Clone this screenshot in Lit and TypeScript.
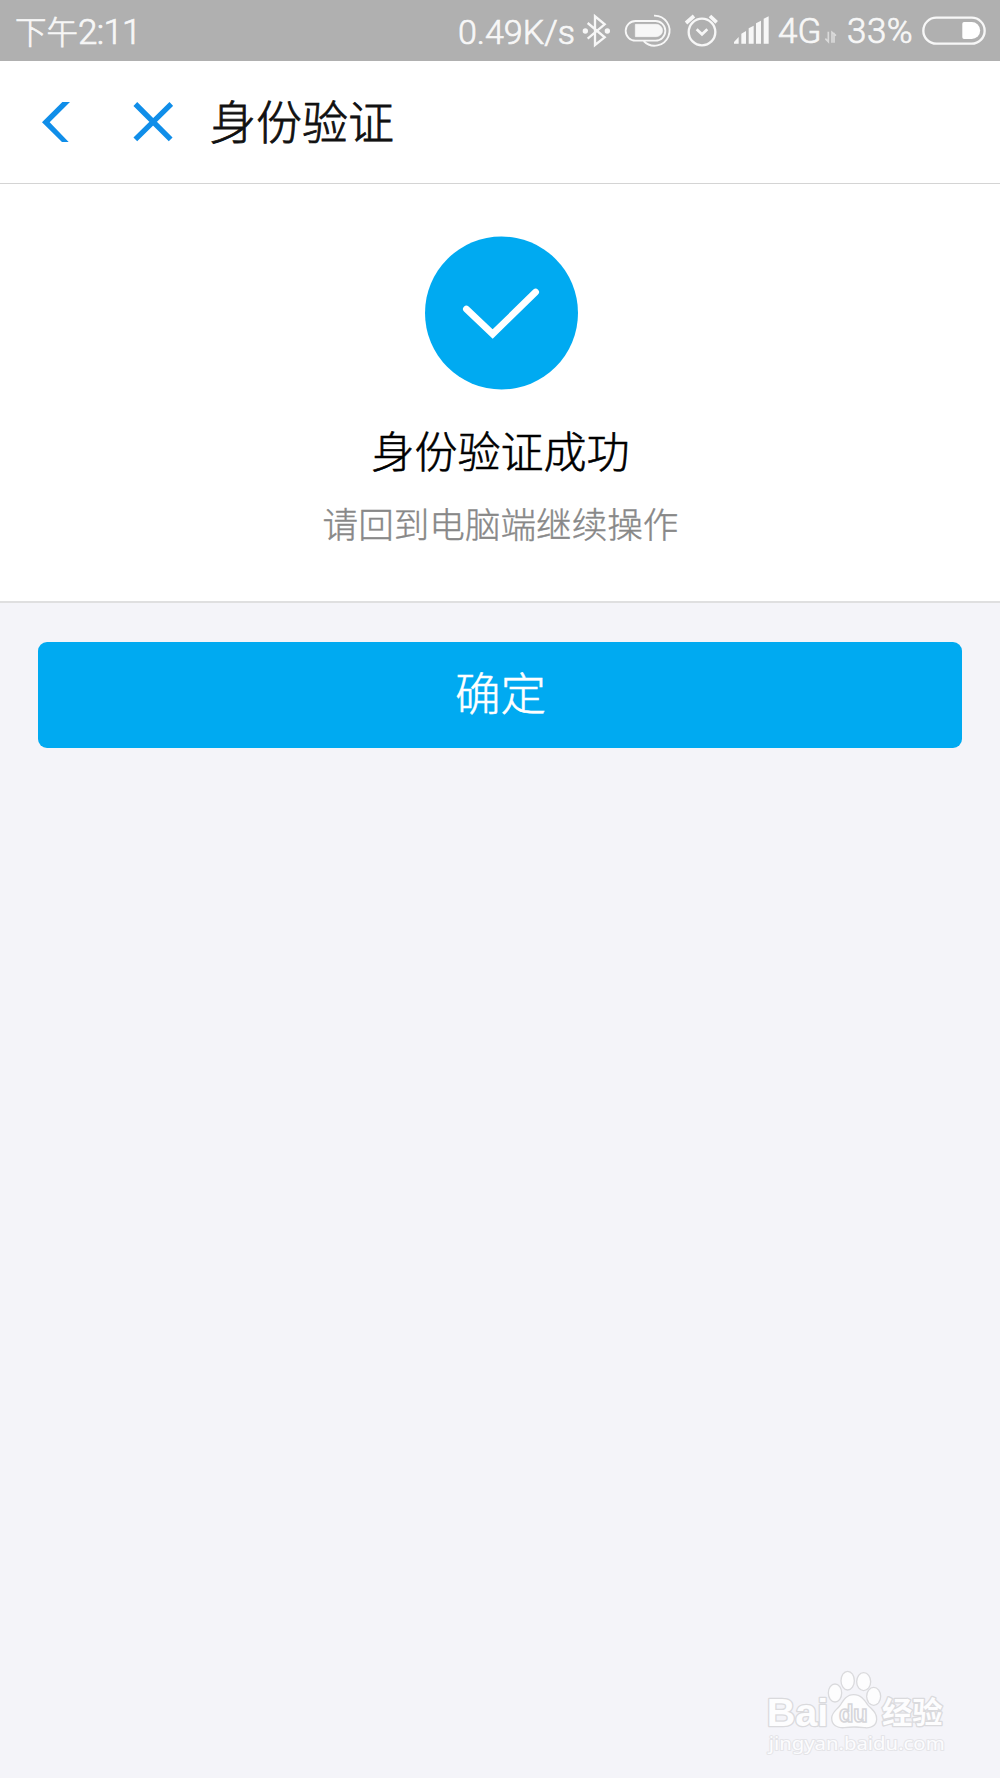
import { LitElement, html, css } from "lit";
import { customElement } from "lit/decorators.js";

@customElement("status-bar")
class StatusBar extends LitElement {
  static styles = css`
    :host {
      display: flex;
      align-items: center;
      justify-content: space-between;
      box-sizing: border-box;
      height: 61px;
      padding: 0 13px 0 15px;
      background: #b0b0b0;
      color: #f7f7f7;
      font-family: Roboto, "Noto Sans CJK SC", sans-serif;
      font-weight: 300;
      font-size: 34px;
      line-height: 61px;
      white-space: nowrap;
    }
    .text {
      display: block;
      height: 61px;
      padding-top: 3px;
      box-sizing: border-box;
      line-height: 58px;
      -webkit-text-stroke: 0.7px #f7f7f7;
    }
    .clock { font-size: 31.5px; padding-top: 4px; }
    .digits { font-size: 35px; letter-spacing: -0.7px; }
    .right { display: flex; }
    .speed { width: 123px; }
    .net { width: 48px; font-size: 35px; padding-left: 1px; box-sizing: border-box; }
    .level { width: 75px; font-size: 35px; letter-spacing: 0.5px; }
    svg { display: block; }
  `;
  render() {
    return html`
      <span class="text clock">下午<span class="digits">2:11</span></span>
      <div class="right">
        <span class="text speed">0.49K/s</span>
        <svg width="153" height="61" viewBox="423 0 459 183" fill="none" stroke="#f7f7f7" stroke-width="7">
          <path d="M443 69L494 112L465 135V49L494 73L443 116" stroke-linejoin="miter" />
          <circle cx="436" cy="93" r="8" fill="#f7f7f7" stroke="none" />
          <circle cx="502" cy="93" r="8" fill="#f7f7f7" stroke="none" />
          <rect x="557" y="63" width="119" height="59" rx="29.5" stroke-width="5.5" />
          <path d="M586 73H649A18.5 18.5 0 0 1 649 110H586Z" fill="#f7f7f7" stroke-width="2" />
          <path d="M642 47A45 45 0 1 1 611 123" stroke-width="5.5" />
          <circle cx="786" cy="96" r="40" />
          <path d="M770 88L786 103L802 88" stroke-width="8" />
          <path d="M738 69L762 48M810 48L830 67" stroke-width="11" />
        </svg>
        <svg width="43" height="61" viewBox="45 0 129 183" fill="#f7f7f7">
          <path d="M45 126L59 111V131H37ZM67 101L81 93V131H67ZM89 85L104 77V131H89ZM111 70L126 62V131H111ZM134 56L149 49V131H134Z" />
        </svg>
        <span class="text net">4G</span>
        <svg width="22" height="61" viewBox="315 0 66 183" fill="none" stroke="#dadada" stroke-width="5">
          <path d="M325 95V125L316 116M336 128V97L348 107M342 98V128" />
        </svg>
        <span class="text level">33%</span>
        <svg width="65" height="61" viewBox="605 0 195 183">
          <rect x="609" y="53" width="184" height="78" rx="39" fill="none" stroke="#f7f7f7" stroke-width="7" />
          <path d="M731 66H754A25 25 0 0 1 754 117H731Q726 117 726 112V71Q726 66 731 66Z" fill="#fff" />
        </svg>
      </div>
    `;
  }
}

@customElement("brand-mark")
class BrandMark extends LitElement {
  static styles = css`
    :host { display: block; }
    svg { display: block; }
    .latin { font-family: "Liberation Sans", sans-serif; font-weight: 700; }
    .han { font-family: "Noto Sans CJK SC", sans-serif; font-weight: 700; }
    .url { font-family: "Noto Sans", "Open Sans", sans-serif; font-weight: 400; }
    .outlined { fill: #fdfdfe; stroke: #dadadd; stroke-width: 8px; stroke-linejoin: round; paint-order: stroke; }
    .inner { fill: #fdfdfe; stroke: #d6d6da; stroke-width: 5px; }
    .soft { fill: #fcfcfe; stroke: #e4e4e8; stroke-width: 6px; stroke-linejoin: round; paint-order: stroke; }
  `;
  render() {
    return html`
      <svg width="260" height="128" viewBox="0 0 780 384">
        <g class="outlined">
          <ellipse cx="285" cy="129" rx="18" ry="25" />
          <ellipse cx="323" cy="92" rx="18" ry="26" />
          <ellipse cx="371" cy="95" rx="19" ry="25" />
          <ellipse cx="401" cy="139" rx="19" ry="25" />
          <path d="M341 136C361 136 371 150 381 165C394 180 408 187 408 208C407 228 390 233 373 231C350 228 334 228 313 231C292 233 277 224 277 204C278 187 293 180 303 166C313 150 322 136 341 136Z" />
          <text class="latin" x="80" y="228" font-size="116" textLength="185" lengthAdjust="spacingAndGlyphs">Bai</text>
          <text class="han" x="426" y="220" font-size="88" textLength="182" lengthAdjust="spacingAndGlyphs">经验</text>
        </g>
        <text class="latin inner" x="297" y="216" font-size="72" textLength="86" lengthAdjust="spacingAndGlyphs">du</text>
        <text class="url soft" x="86" y="301" font-size="56" textLength="528" lengthAdjust="spacingAndGlyphs">jingyan.baidu.com</text>
      </svg>
    `;
  }
}

@customElement("app-root")
class AppRoot extends LitElement {
  static styles = css`
    :host {
      display: flex;
      flex-direction: column;
      position: relative;
      box-sizing: border-box;
      width: 1000px;
      height: 1778px;
      overflow: hidden;
      background: #f4f4f9;
      font-family: "Noto Sans CJK SC", sans-serif;
    }
    .header {
      display: flex;
      align-items: center;
      box-sizing: border-box;
      height: 123px;
      padding-left: 40px;
      background: #fff;
      border-bottom: 1px solid #d4d4d4;
    }
    .back { margin-right: 60px; }
    .close { margin-right: 37px; }
    svg { display: block; flex: none; }
    .title {
      margin: 0;
      padding-bottom: 6px;
      font-size: 46px;
      font-weight: 300;
      line-height: 60px;
      color: #111;
      -webkit-text-stroke: 0.8px #111;
    }
    .result {
      display: flex;
      flex-direction: column;
      align-items: center;
      box-sizing: border-box;
      height: 419px;
      padding-top: 52px;
      background: #fff;
      border-bottom: 2px solid #dfdfe0;
    }
    .badge { margin-left: 3px; }
    .heading {
      margin: 27px 0 0 1px;
      font-size: 43px;
      font-weight: 300;
      line-height: 64px;
      color: #000;
      -webkit-text-stroke: 0.6px #000;
    }
    .note {
      margin: 16px 0 0 1px;
      font-size: 35.6px;
      font-weight: 300;
      line-height: 52px;
      color: #888;
      -webkit-text-stroke: 0.4px #888;
    }
    .confirm {
      display: flex;
      justify-content: center;
      margin: 39px 38px 0;
      height: 106px;
      padding: 0 0 0 1px;
      border: 0;
      border-radius: 9px;
      background: #00aaf1;
      color: #fff;
      font-family: inherit;
      font-size: 45.5px;
      font-weight: 300;
      line-height: 98px;
      -webkit-text-stroke: 0.5px #fff;
    }
    .mark { position: absolute; right: 0; bottom: 0; }
  `;
  render() {
    return html`
      <status-bar></status-bar>
      <header class="header">
        <svg class="back" width="32" height="44" viewBox="120 300 96 132">
          <path d="M187 306H210L149 367L206 426H186L126 367Z" fill="#108ee9" />
        </svg>
        <svg class="close" width="41" height="44" viewBox="396 300 123 132">
          <path d="M406 312L512 418M514 312L406 418" stroke="#108ee9" stroke-width="16" />
        </svg>
        <h1 class="title">身份验证</h1>
      </header>
      <section class="result">
        <svg class="badge" width="153" height="154" viewBox="375 49 459 462">
          <circle cx="604.5" cy="280" r="229.5" fill="#00aaf1" />
          <path d="M499 268L578 343L707 217" fill="none" stroke="#fff" stroke-width="20" stroke-linecap="round" />
        </svg>
        <h2 class="heading">身份验证成功</h2>
        <p class="note">请回到电脑端继续操作</p>
      </section>
      <button class="confirm">确定</button>
      <brand-mark class="mark"></brand-mark>
    `;
  }
}
